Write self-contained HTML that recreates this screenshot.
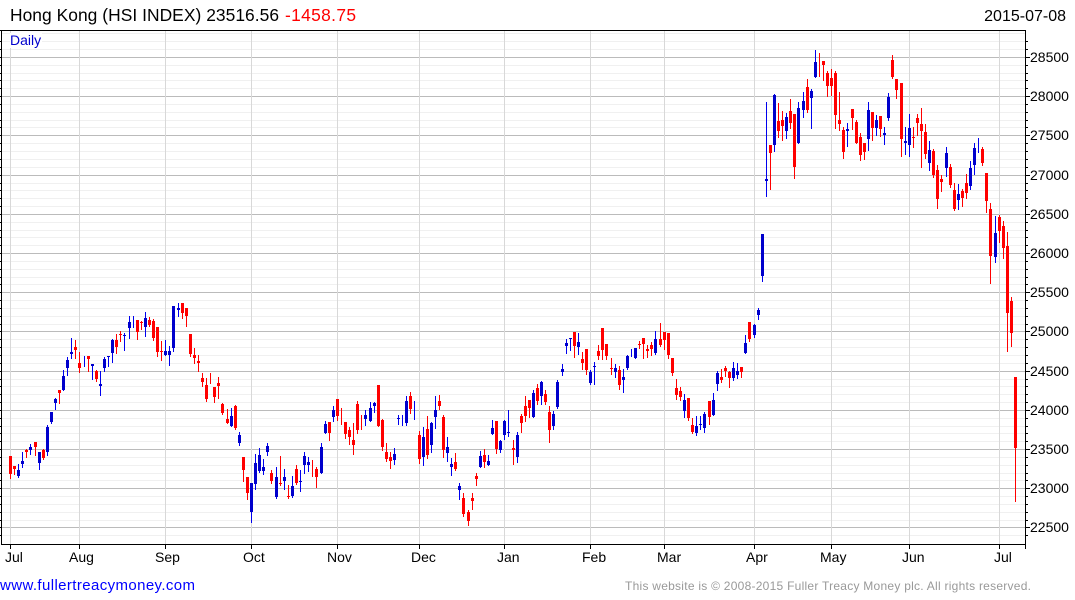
<!DOCTYPE html>
<html><head><meta charset="utf-8"><title>Hong Kong (HSI INDEX)</title>
<style>html,body{margin:0;padding:0;background:#fff;width:1075px;height:600px;overflow:hidden}svg{display:block}text{font-family:"Liberation Sans",Arial,sans-serif}</style></head>
<body>
<svg width="1075" height="600" viewBox="0 0 1075 600" xmlns="http://www.w3.org/2000/svg">
<g shape-rendering="crispEdges" fill="none">
<path stroke="#f0f0f0" d="M2 33.5H1025M2 41.5H1025M2 49.5H1025M2 65.5H1025M2 73.5H1025M2 80.5H1025M2 88.5H1025M2 104.5H1025M2 112.5H1025M2 120.5H1025M2 127.5H1025M2 143.5H1025M2 151.5H1025M2 159.5H1025M2 167.5H1025M2 183.5H1025M2 190.5H1025M2 198.5H1025M2 206.5H1025M2 222.5H1025M2 230.5H1025M2 237.5H1025M2 245.5H1025M2 261.5H1025M2 269.5H1025M2 277.5H1025M2 284.5H1025M2 300.5H1025M2 308.5H1025M2 316.5H1025M2 324.5H1025M2 339.5H1025M2 347.5H1025M2 355.5H1025M2 363.5H1025M2 379.5H1025M2 386.5H1025M2 394.5H1025M2 402.5H1025M2 418.5H1025M2 426.5H1025M2 433.5H1025M2 441.5H1025M2 457.5H1025M2 465.5H1025M2 473.5H1025M2 480.5H1025M2 496.5H1025M2 504.5H1025M2 512.5H1025M2 520.5H1025M2 535.5H1025"/>
<path stroke="#bbb" d="M2 57.5H1025M2 96.5H1025M2 135.5H1025M2 175.5H1025M2 214.5H1025M2 253.5H1025M2 292.5H1025M2 331.5H1025M2 371.5H1025M2 410.5H1025M2 449.5H1025M2 488.5H1025M2 527.5H1025"/>
<path stroke="#d8d8d8" d="M10.5 31V544M79.5 31V544M165.5 31V544M251.5 31V544M337.5 31V544M419.5 31V544M504.5 31V544M590.5 31V544M664.5 31V544M754.5 31V544M831.5 31V544M909.5 31V544M999.5 31V544"/>
<rect x="10" y="33" width="32" height="15" fill="#fff"/>
<g transform="translate(0.167 290) scale(0.33333)" >
<path stroke="#f00" stroke-width="3" d="M31 498V567M43 528V555M79 477V504M106 456V498M130 477V510M178 300V342M226 150V207M238 186V249M265 198V246M289 240V276M349 132V192M361 123V156M412 90V150M424 93V120M448 81V111M460 87V153M472 111V201M484 153V213M547 39V87M559 54V111M571 132V201M583 174V222M595 195V246M607 249V291M619 264V336M631 249V282M643 291V339M655 261V327M667 339V375M682 357V402M706 345V420M730 501V576M742 561V630M814 540V582M841 498V588M865 585V627M889 525V585M937 510V561M949 531V594M988 396V453M1012 327V393M1024 354V405M1036 396V447M1048 411V465M1060 399V495M1072 333V432"/>
<path stroke="#f00" stroke-width="9" d="M31 498V552M43 528V537M79 480V486M106 456V471M130 480V504M178 300V309M226 171V180M238 219V234M265 198V207M289 243V267M349 150V171M361 132V135M412 90V126M424 96V99M448 90V105M460 93V144M472 111V186M484 183V186M547 39V69M559 54V78M571 132V192M583 195V204M595 213V219M607 264V276M619 285V327M643 291V321M655 279V288M667 342V369M682 387V399M706 348V414M730 501V540M742 561V609M814 549V573M841 579V582M865 618V621M889 537V579M949 537V561M988 396V429M1012 327V378M1036 396V432M1048 420V441M1060 450V465M1072 342V420"/>
<path stroke="#00e" stroke-width="3" d="M55 522V564M67 486V534M91 462V495M118 486V540M142 405V498M154 366V402M166 324V360M190 240V303M202 201V258M214 144V207M253 198V231M277 222V270M301 243V318M313 201V246M325 198V231M337 147V219M373 129V183M388 78V147M400 78V114M436 66V141M496 150V198M508 168V228M520 48V186M535 39V81M694 354V411M718 426V468M754 579V699M766 492V600M778 474V549M790 507V555M802 459V498M829 531V627M853 537V600M877 558V624M901 540V606M913 486V552M925 501V546M964 459V552M976 393V432M1000 348V396"/>
<path stroke="#00c" stroke-width="9" d="M55 540V558M67 513V522M91 471V480M118 486V519M142 411V486M154 366V396M166 327V339M190 258V300M202 210V234M214 186V192M277 222V228M301 282V288M313 207V234M325 198V201M337 150V189M373 135V138M388 96V114M436 84V111M496 183V195M508 183V195M520 48V174M535 54V60M694 378V408M718 435V459M754 579V666M766 519V582M778 495V543M790 531V543M802 468V486M829 561V621M853 561V573M877 588V618M901 573V576M913 498V525M925 516V525M964 471V549M976 402V429M1000 360V381"/>
</g>
<g transform="translate(360.167 300) scale(0.33333)">
<path stroke="#f00" stroke-width="3" d="M4 345V390M55 255V381M67 357V453M79 429V486M91 456V507M151 276V342M178 393V492M202 348V477M238 285V330M250 345V474M286 459V513M310 579V651M325 630V678M337 579V630M349 519V558M373 447V504M409 363V462M460 420V495M484 342V399M496 288V366M508 300V354M532 252V315M556 270V315M568 318V429M643 96V174M667 156V210M679 147V225M715 135V180M727 84V180M739 132V180M754 174V225M778 198V270M838 123V147M850 114V177M862 135V174M874 126V168M901 69V141M913 96V150M925 99V177M937 174V228M949 237V300M961 261V303M985 294V363M997 354V402M1048 303V375"/>
<path stroke="#f00" stroke-width="9" d="M55 255V378M67 360V441M79 456V477M91 471V483M151 288V327M178 405V477M202 387V465M238 303V318M250 351V450M286 486V507M310 594V642M325 636V663M337 594V603M349 528V537M373 465V486M409 363V447M460 444V450M484 348V369M496 318V348M508 300V324M532 264V303M556 282V306M568 336V390M643 96V138M667 177V189M679 147V210M715 153V168M727 84V150M739 132V168M754 204V207M778 210V255M838 132V135M850 114V132M862 147V153M874 135V147M901 117V135M913 96V120M925 99V165M937 174V219M949 264V285M961 273V291M985 294V354M997 375V396M1048 303V351"/>
<path stroke="#00e" stroke-width="3" d="M16 330V378M31 306V366M43 306V339M103 444V495M115 345V375M127 345V378M139 288V378M163 303V360M190 381V498M214 366V459M226 288V387M262 411V486M274 474V528M298 549V600M361 453V504M385 465V498M397 360V405M421 420V459M433 360V420M445 330V411M472 396V489M520 270V354M544 243V315M580 333V390M592 240V327M607 192V228M619 117V162M631 114V153M655 99V165M691 210V255M703 186V255M766 192V234M790 207V279M802 165V210M814 147V171M826 144V177M886 93V165M973 282V354M1009 348V408M1021 348V390M1033 336V399M1060 279V348M1072 213V273"/>
<path stroke="#00c" stroke-width="9" d="M16 345V357M31 324V363M43 309V318M103 462V480M115 354V357M139 303V369M190 411V471M214 369V435M226 330V351M262 441V459M274 492V501M298 558V570M361 468V501M385 483V495M397 384V402M421 423V450M433 363V405M445 396V399M472 405V471M520 279V351M544 246V288M580 342V378M592 246V321M607 207V216M619 129V138M631 114V117M655 126V141M691 216V249M703 198V201M766 204V216M790 231V240M802 168V204M826 144V174M886 117V159M973 300V333M1009 378V399M1021 372V375M1033 342V384M1060 300V345M1072 219V252"/>
</g>
<g transform="translate(720.167 0) scale(0.33333)">
<path stroke="#f00" stroke-width="3" d="M4 1107V1149M16 1098V1131M28 1113V1164M64 1101V1134M88 966V1026M151 435V570M175 309V414M187 333V423M211 297V387M223 342V537M262 237V339M298 159V231M310 183V243M322 213V291M334 207V288M346 213V387M358 276V393M370 381V477M397 327V390M409 360V432M421 399V483M433 429V480M457 336V423M481 348V411M517 165V237M529 237V297M544 249V471M580 381V444M592 342V408M604 324V504M616 372V477M640 447V534M652 495V627M664 525V576M691 492V564M703 549V633M727 567V621M739 522V597M787 441V498M799 519V639M811 609V852M838 645V729M850 663V777M862 696V1056M874 891V1041M886 1344V1506"/>
<path stroke="#f00" stroke-width="9" d="M4 1131V1140M16 1104V1113M28 1116V1134M64 1101V1116M88 966V1017M151 435V459M175 363V393M187 360V378M211 333V369M223 342V501M262 261V330M310 183V195M322 219V258M334 234V258M346 219V345M358 360V372M370 390V456M397 327V354M409 366V429M421 411V465M433 429V456M457 336V384M481 348V387M517 180V231M529 237V270M544 249V417M580 411V414M592 354V369M604 372V393M616 396V462M640 453V525M652 510V597M664 537V546M691 501V555M703 570V627M727 573V594M739 549V579M787 447V489M799 519V603M811 627V768M838 651V693M850 678V744M862 738V939M874 903V999M886 1131V1344"/>
<path stroke="#00e" stroke-width="3" d="M40 1086V1143M52 1089V1137M76 1005V1062M103 972V1014M115 924V960M127 702V846M139 306V591M163 282V456M199 339V417M235 306V432M250 276V354M274 267V387M286 150V234M382 369V441M445 306V453M469 345V408M493 381V435M505 279V363M556 381V465M568 342V471M628 423V513M679 441V531M715 552V630M751 483V570M763 429V525M775 414V459M826 648V789"/>
<path stroke="#00c" stroke-width="9" d="M40 1104V1134M52 1113V1125M76 1029V1059M103 975V1005M115 930V945M127 702V828M139 537V543M163 285V435M199 351V393M235 324V429M250 303V330M274 273V294M286 186V231M382 387V393M445 330V417M469 360V384M493 399V405M505 291V354M556 423V429M568 384V435M628 450V489M679 459V504M715 582V600M751 504V558M763 444V495M826 699V771"/>
</g>
<path stroke="#000" d="M1.5 30V545M0 30.5H1026M1 544.5H1026M1025.5 30V549"/>
<path stroke="#000" d="M0 41.5H1M0 49.5H1M0 57.5H1M0 65.5H1M0 73.5H1M0 80.5H1M0 88.5H1M0 96.5H1M0 104.5H1M0 112.5H1M0 120.5H1M0 127.5H1M0 135.5H1M0 143.5H1M0 151.5H1M0 159.5H1M0 167.5H1M0 175.5H1M0 183.5H1M0 190.5H1M0 198.5H1M0 206.5H1M0 214.5H1M0 222.5H1M0 230.5H1M0 237.5H1M0 245.5H1M0 253.5H1M0 261.5H1M0 269.5H1M0 277.5H1M0 284.5H1M0 292.5H1M0 300.5H1M0 308.5H1M0 316.5H1M0 324.5H1M0 331.5H1M0 339.5H1M0 347.5H1M0 355.5H1M0 363.5H1M0 371.5H1M0 379.5H1M0 386.5H1M0 394.5H1M0 402.5H1M0 410.5H1M0 418.5H1M0 426.5H1M0 433.5H1M0 441.5H1M0 449.5H1M0 457.5H1M0 465.5H1M0 473.5H1M0 480.5H1M0 488.5H1M0 496.5H1M0 504.5H1M0 512.5H1M0 520.5H1M0 527.5H1M0 535.5H1"/>
<path stroke="#000" d="M1026 57.5H1030M1026 96.5H1030M1026 135.5H1030M1026 175.5H1030M1026 214.5H1030M1026 253.5H1030M1026 292.5H1030M1026 331.5H1030M1026 371.5H1030M1026 410.5H1030M1026 449.5H1030M1026 488.5H1030M1026 527.5H1030M1026 41.5H1028M1026 49.5H1028M1026 65.5H1028M1026 73.5H1028M1026 80.5H1028M1026 88.5H1028M1026 104.5H1028M1026 112.5H1028M1026 120.5H1028M1026 127.5H1028M1026 143.5H1028M1026 151.5H1028M1026 159.5H1028M1026 167.5H1028M1026 183.5H1028M1026 190.5H1028M1026 198.5H1028M1026 206.5H1028M1026 222.5H1028M1026 230.5H1028M1026 237.5H1028M1026 245.5H1028M1026 261.5H1028M1026 269.5H1028M1026 277.5H1028M1026 284.5H1028M1026 300.5H1028M1026 308.5H1028M1026 316.5H1028M1026 324.5H1028M1026 339.5H1028M1026 347.5H1028M1026 355.5H1028M1026 363.5H1028M1026 379.5H1028M1026 386.5H1028M1026 394.5H1028M1026 402.5H1028M1026 418.5H1028M1026 426.5H1028M1026 433.5H1028M1026 441.5H1028M1026 457.5H1028M1026 465.5H1028M1026 473.5H1028M1026 480.5H1028M1026 496.5H1028M1026 504.5H1028M1026 512.5H1028M1026 520.5H1028M1026 535.5H1028"/>
<path stroke="#000" d="M10.5 545V549M79.5 545V549M165.5 545V549M251.5 545V549M337.5 545V549M419.5 545V549M504.5 545V549M590.5 545V549M664.5 545V549M754.5 545V549M831.5 545V549M909.5 545V549M999.5 545V549"/>
</g>
<text x="10" y="21" font-size="17.4" fill="#000" textLength="269">Hong Kong (HSI INDEX) 23516.56</text>
<text x="285" y="21" font-size="17.4" fill="#f00" textLength="71">-1458.75</text>
<text x="1066" y="21" font-size="16" fill="#000" text-anchor="end">2015-07-08</text>
<text x="10" y="45" font-size="14" fill="#00c">Daily</text>
<g font-size="14" fill="#000">
<text x="1030" y="62">28500</text><text x="1030" y="101">28000</text><text x="1030" y="140">27500</text><text x="1030" y="180">27000</text><text x="1030" y="219">26500</text><text x="1030" y="258">26000</text><text x="1030" y="297">25500</text><text x="1030" y="336">25000</text><text x="1030" y="376">24500</text><text x="1030" y="415">24000</text><text x="1030" y="454">23500</text><text x="1030" y="493">23000</text><text x="1030" y="532">22500</text>
</g>
<g font-size="14" fill="#000">
<text x="5" y="562">Jul</text><text x="69" y="562">Aug</text><text x="155" y="562">Sep</text><text x="243" y="562">Oct</text><text x="327" y="562">Nov</text><text x="411" y="562">Dec</text><text x="497" y="562">Jan</text><text x="582" y="562">Feb</text><text x="657" y="562">Mar</text><text x="746" y="562">Apr</text><text x="820" y="562">May</text><text x="902" y="562">Jun</text><text x="994" y="562">Jul</text>
</g>
<text x="0" y="590" font-size="15" fill="#00f" textLength="195">www.fullertreacymoney.com</text>
<text x="625" y="590" font-size="12" fill="#999" textLength="406">This website is © 2008-2015 Fuller Treacy Money plc. All rights reserved.</text>
</svg>
</body></html>
